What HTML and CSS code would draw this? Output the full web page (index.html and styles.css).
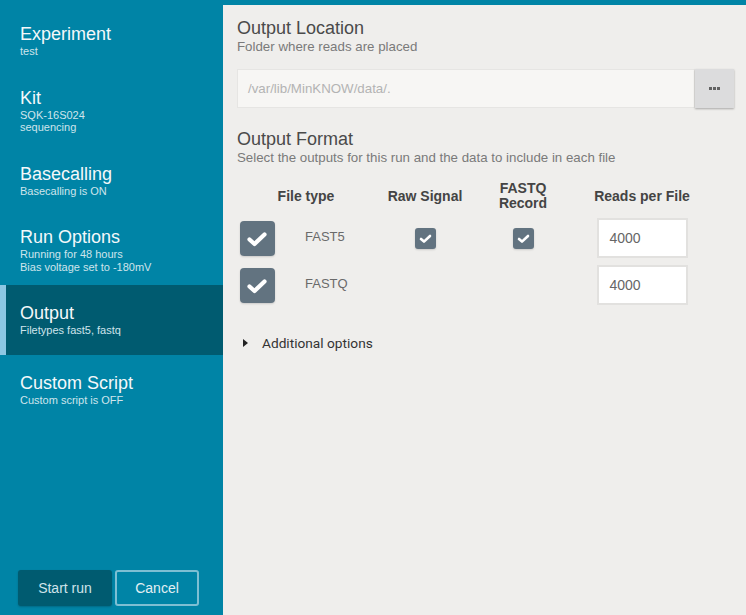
FILE: index.html
```html
<!DOCTYPE html>
<html>
<head>
<meta charset="utf-8">
<link rel="stylesheet" href="styles.css">
</head>
<body>
<aside class="sidebar">
  <nav class="steps">
    <div class="step">
      <div class="step-title">Experiment</div>
      <div class="step-sub">test</div>
    </div>
    <div class="step">
      <div class="step-title">Kit</div>
      <div class="step-sub">SQK-16S024</div>
      <div class="step-sub">sequencing</div>
    </div>
    <div class="step">
      <div class="step-title">Basecalling</div>
      <div class="step-sub">Basecalling is ON</div>
    </div>
    <div class="step">
      <div class="step-title">Run Options</div>
      <div class="step-sub">Running for 48 hours</div>
      <div class="step-sub">Bias voltage set to -180mV</div>
    </div>
    <div class="step active">
      <div class="step-title">Output</div>
      <div class="step-sub">Filetypes fast5, fastq</div>
    </div>
    <div class="step">
      <div class="step-title">Custom Script</div>
      <div class="step-sub">Custom script is OFF</div>
    </div>
  </nav>
  <div class="actions">
    <button class="btn btn-start">Start run</button>
    <button class="btn btn-cancel">Cancel</button>
  </div>
</aside>
<main class="main">
  <h2 class="section-title">Output Location</h2>
  <p class="section-sub">Folder where reads are placed</p>
  <div class="path-row">
    <div class="path-input">/var/lib/MinKNOW/data/.</div>
    <button class="path-btn"><svg width="12" height="4" viewBox="0 0 12 4"><rect x="0" y="0" width="3" height="3" fill="#626262"/><rect x="4" y="0" width="3" height="3" fill="#626262"/><rect x="8" y="0" width="3" height="3" fill="#626262"/></svg></button>
  </div>

  <h2 class="section-title format-title">Output Format</h2>
  <p class="section-sub">Select the outputs for this run and the data to include in each file</p>

  <div class="table">
    <div class="th">File type</div>
    <div class="th">Raw Signal</div>
    <div class="th">FASTQ<br>Record</div>
    <div class="th">Reads per File</div>

    <div class="td td-type">
      <span class="cb cb-big"><svg width="35" height="35" viewBox="0 0 35 35"><path d="M9.5 18.5 L14.5 23 L24.5 13.5" fill="none" stroke="#fff" stroke-width="4.2" stroke-linecap="round" stroke-linejoin="round"/></svg></span>
      <span class="type-label">FAST5</span>
    </div>
    <div class="td"><span class="cb cb-small"><svg width="21" height="21" viewBox="0 0 21 21"><path d="M6 11 L9 13.6 L15 8" fill="none" stroke="#fff" stroke-width="2.6" stroke-linecap="round" stroke-linejoin="round"/></svg></span></div>
    <div class="td"><span class="cb cb-small"><svg width="21" height="21" viewBox="0 0 21 21"><path d="M6 11 L9 13.6 L15 8" fill="none" stroke="#fff" stroke-width="2.6" stroke-linecap="round" stroke-linejoin="round"/></svg></span></div>
    <div class="td"><div class="num-input">4000</div></div>

    <div class="td td-type">
      <span class="cb cb-big"><svg width="35" height="35" viewBox="0 0 35 35"><path d="M9.5 18.5 L14.5 23 L24.5 13.5" fill="none" stroke="#fff" stroke-width="4.2" stroke-linecap="round" stroke-linejoin="round"/></svg></span>
      <span class="type-label">FASTQ</span>
    </div>
    <div class="td"></div>
    <div class="td"></div>
    <div class="td"><div class="num-input">4000</div></div>
  </div>

  <div class="additional">
    <span class="caret"></span>
    <span class="additional-label">Additional options</span>
  </div>
</main>
</body>
</html>
```

FILE: styles.css
```css
* { box-sizing: border-box; }

html, body {
  margin: 0;
  padding: 0;
  height: 615px;
  overflow: hidden;
}

body {
  display: flex;
  font-family: "Liberation Sans", Arial, sans-serif;
  background: #efeeec;
}

.sidebar {
  width: 223px;
  flex: none;
  height: 615px;
  background: #0084a6;
  display: flex;
  flex-direction: column;
  padding-top: 6px;
}

.steps {
  flex: 1;
  display: flex;
  flex-direction: column;
}

.step {
  padding: 17px 20px 12px 20px;
  color: #f2f7f9;
}

.step.active {
  background: #005b70;
  box-shadow: inset 6px 0 0 #8cc7e3;
  padding-bottom: 18px;
}

.step-title {
  font-size: 18px;
  line-height: 22px;
  color: #f4f8fa;
}

.step-sub {
  font-size: 11px;
  line-height: 12.5px;
  color: #cfe4ec;
}

.actions {
  display: flex;
  gap: 3px;
  padding: 0 0 9px 18px;
}

.btn {
  font-family: "Liberation Sans", Arial, sans-serif;
  font-size: 14px;
  height: 36px;
  border-radius: 3px;
  cursor: pointer;
  padding: 0;
}

.btn-start {
  width: 94px;
  background: #005b70;
  color: #cfe3ea;
  border: none;
  box-shadow: 0 1px 2px rgba(0, 0, 0, 0.2);
}

.btn-cancel {
  width: 84px;
  background: transparent;
  color: #e3eff3;
  border: 2px solid #7ebfd3;
}

.main {
  flex: 1;
  border-top: 5px solid #0084a6;
  padding: 12px 12px 0 14px;
}

.section-title {
  margin: 0;
  font-weight: normal;
  font-size: 18px;
  line-height: 22px;
  color: #4a4a4a;
}

.section-sub {
  margin: 0;
  font-size: 13.3px;
  line-height: 16px;
  color: #7a7a7a;
}

.path-row {
  display: flex;
  margin-top: 14px;
  height: 39px;
}

.path-input {
  flex: 1;
  background: #f7f6f4;
  border: 1px solid #e6e5e3;
  font-size: 13.3px;
  color: #b3b3b3;
  padding: 0 10px;
  display: flex;
  align-items: center;
}

.path-btn {
  width: 39px;
  height: 39px;
  border: none;
  background: #dcdcdd;
  box-shadow: 0 1px 2px rgba(0, 0, 0, 0.3);
  display: flex;
  align-items: center;
  justify-content: center;
  padding: 0;
}

.format-title {
  margin-top: 20px;
}

.table {
  display: grid;
  grid-template-columns: 138px 100px 96px 142px;
  grid-template-rows: 30px 40px 40px;
  row-gap: 7px;
  margin-top: 15px;
}

.th {
  font-weight: bold;
  font-size: 14px;
  line-height: 15px;
  color: #444;
  text-align: center;
  display: flex;
  align-items: center;
  justify-content: center;
}

.td {
  display: flex;
  align-items: center;
  justify-content: center;
}

.td-type {
  justify-content: flex-start;
  padding-left: 3px;
}

.cb {
  display: inline-flex;
  background: #627380;
  box-shadow: 0 1px 2px rgba(0, 0, 0, 0.15);
}

.cb-big {
  width: 35px;
  height: 35px;
  border-radius: 4px;
}

.cb-small {
  width: 21px;
  height: 21px;
  border-radius: 3px;
}

.type-label {
  margin-left: 30px;
  margin-top: -4px;
  font-size: 13px;
  color: #6a6a6a;
}

.num-input {
  width: 91px;
  height: 40px;
  background: #fff;
  border: 2px solid #e2e1df;
  font-size: 14px;
  color: #666;
  padding-left: 11px;
  display: flex;
  align-items: center;
}

.additional {
  display: flex;
  align-items: center;
  margin-top: 28px;
  height: 20px;
  padding-left: 6px;
}

.caret {
  width: 0;
  height: 0;
  border-top: 4.5px solid transparent;
  border-bottom: 4.5px solid transparent;
  border-left: 5px solid #222;
}

.additional-label {
  margin-left: 14px;
  font-family: Roboto, "Liberation Sans", sans-serif;
  font-size: 13.7px;
  color: #333;
}
```
